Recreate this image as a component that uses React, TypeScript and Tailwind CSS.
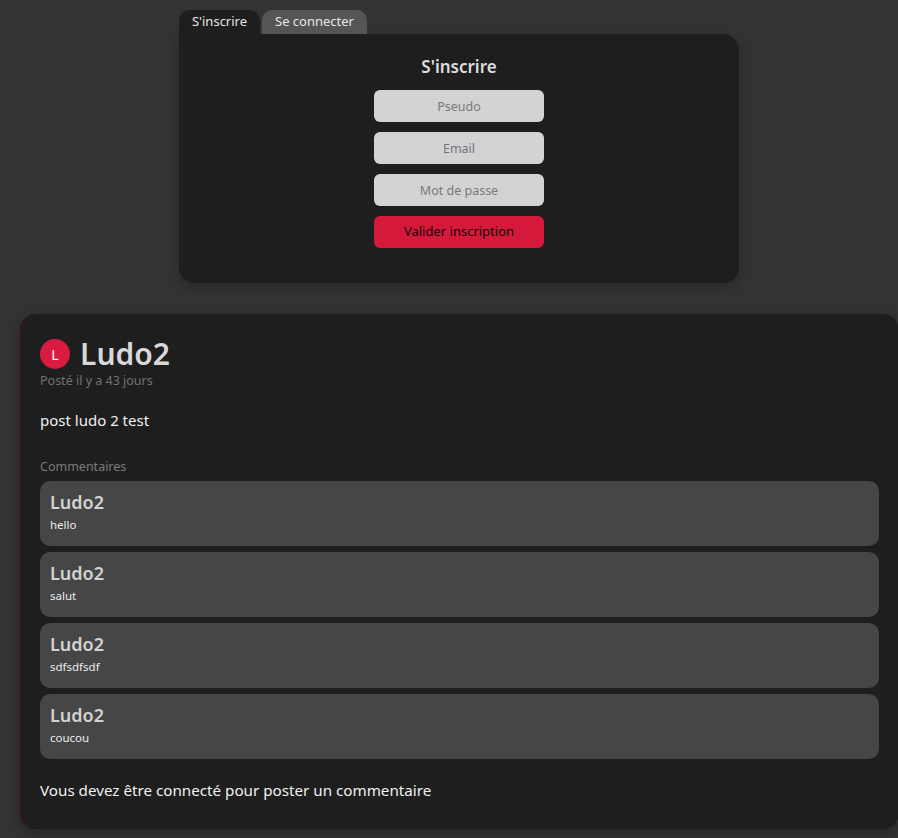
import * as React from "react";

const comments = [
  { author: "Ludo2", text: "hello" },
  { author: "Ludo2", text: "salut" },
  { author: "Ludo2", text: "sdfsdfsdf" },
  { author: "Ludo2", text: "coucou" }
];

function AuthForm() {
  return (
    <div className="ml-[179px] w-[560px] pt-[10px]">
      <div className="flex gap-[2px]">
        <button className="h-[24px] w-[81px] rounded-t-[10px] bg-[#1e1e1e] text-[13px] text-[#e6e6e6]">
          S'inscrire
        </button>
        <button className="h-[24px] w-[105px] rounded-t-[10px] bg-[#555555] text-[13px] text-[#e6e6e6]">
          Se connecter
        </button>
      </div>
      <div className="flex h-[249px] flex-col items-center rounded-b-[16px] rounded-tr-[16px] bg-[#1e1e1e] pt-[22px] shadow-[0_4px_12px_rgba(0,0,0,0.25)]">
        <h2 className="text-[17px] font-semibold leading-[22px] text-[#dddddd]">S'inscrire</h2>
        <form className="mt-[12px] flex flex-col gap-[10px]">
          <input
            placeholder="Pseudo"
            className="h-[32px] w-[170px] rounded-[6px] bg-[#d3d3d3] text-center text-[12.5px] placeholder:text-[#7a7a7a] focus:outline-none"
          />
          <input
            placeholder="Email"
            className="h-[32px] w-[170px] rounded-[6px] bg-[#d3d3d3] text-center text-[12.5px] placeholder:text-[#6e7380] focus:outline-none"
          />
          <input
            type="password"
            placeholder="Mot de passe"
            className="h-[32px] w-[170px] rounded-[6px] bg-[#d3d3d3] text-center text-[12.5px] placeholder:text-[#7a7a7a] focus:outline-none"
          />
          <button
            type="button"
            className="h-[32px] w-[170px] rounded-[6px] bg-[#d4193a] text-[13px] font-normal text-[#12070a]"
          >
            Valider inscription
          </button>
        </form>
      </div>
    </div>
  );
}

function Post() {
  return (
    <div className="ml-[20px] mt-[31px] w-[879px] rounded-[16px] border-l border-[#4e0a12] bg-[#1e1e1e] pb-[29px] pl-[19px] pr-[20px] pt-[24px] shadow-[0_4px_14px_rgba(0,0,0,0.3)]">
      <div className="flex items-center gap-[10px]">
        <div className="flex h-[30px] w-[30px] items-center justify-center rounded-full bg-[#d91b40] text-[14px] text-white">
          L
        </div>
        <span className="text-[30px] font-semibold leading-[32px] text-[#d8d8d8]">Ludo2</span>
      </div>
      <div className="mt-[3px] text-[12.5px] leading-[16px] text-[#727272]">Posté il y a 43 jours</div>
      <p className="mt-[21px] text-[15px] leading-[20px] text-[#f0f0f0]">post ludo 2 test</p>
      <div className="mt-[29px] text-[12.5px] leading-[16px] text-[#7a7a7a]">Commentaires</div>
      <div className="mt-[6px] flex flex-col gap-[6px]">
        {comments.map((c, i) => (
          <div key={i} className="h-[65px] rounded-[10px] bg-[#464646] px-[10px] pt-[9px]">
            <div className="text-[18px] font-semibold leading-[24px] text-[#d2d2d2]">{c.author}</div>
            <div className="mt-[3px] text-[11.5px] leading-[16px] text-[#ececec]">{c.text}</div>
          </div>
        ))}
      </div>
      <p className="mt-[21px] text-[15.2px] leading-[20px] text-[#f0f0f0]">
        Vous devez être connecté pour poster un commentaire
      </p>
    </div>
  );
}

export default function App() {
  return (
    <div className="min-h-[838px] w-[898px] overflow-hidden bg-[#333333] font-['Noto_Sans','Open_Sans',sans-serif]">
      <AuthForm />
      <Post />
    </div>
  );
}
